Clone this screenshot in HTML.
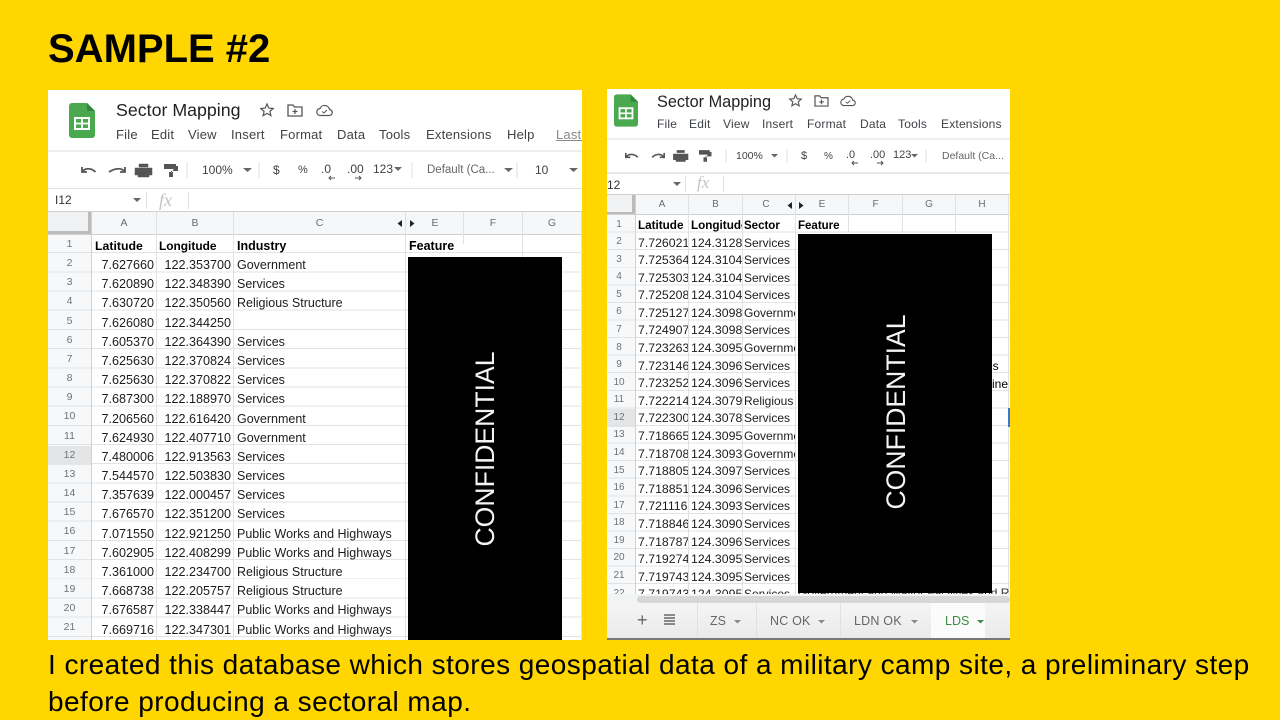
<!DOCTYPE html>
<html><head><meta charset="utf-8"><title>Sample 2</title>
<style>
html,body{margin:0;padding:0}
body{width:1280px;height:720px;background:#ffd600;position:relative;overflow:hidden;font-family:"Liberation Sans",sans-serif;color:#000}
.a{position:absolute}
.t{position:absolute;white-space:nowrap}
.sheet{position:absolute;background:#fff;overflow:hidden;filter:blur(.35px)}
.col{position:absolute;white-space:nowrap;overflow:hidden;color:#1c1c1c}
.m{color:#3f4246}
.h{color:#6a6d70;text-align:center;position:absolute}
.l{position:absolute;background:#e0e1e3}
</style></head><body>
<div class="t" style="left:48px;top:25px;font-size:40px;line-height:48px;font-weight:700">SAMPLE #2</div>

<div class="sheet" style="left:48px;top:90px;width:534px;height:550px">
 <svg class="a" style="left:21px;top:13px" width="26" height="35" viewBox="0 0 26 35"><path d="M3 0h15l8 8v24a3 3 0 0 1-3 3H3a3 3 0 0 1-3-3V3a3 3 0 0 1 3-3z" fill="#4aa94f"/><path d="M18 0l8 8h-8z" fill="#2f8a3b"/><rect x="6" y="15" width="14" height="11" fill="none" stroke="#fff" stroke-width="2"/><path d="M13 15v11M6 20.500h14" stroke="#fff" stroke-width="1.800"/></svg>
 <div class="t" style="left:68px;top:9px;font-size:17.800px;line-height:22px;color:#222">Sector Mapping</div>
 <svg class="a" style="left:211px;top:12px" width="16" height="16" viewBox="0 0 16 16"><path d="M8 2l1.800 4.100 4.400.4-3.300 2.900 1 4.300L8 11.400l-3.900 2.300 1-4.300L1.800 6.500l4.400-.4z" fill="none" stroke="#555" stroke-width="1.200"/></svg>
 <svg class="a" style="left:239px;top:13px" width="16" height="14" viewBox="0 0 16 14"><path d="M1 2h5l1.500 2H15v9H1z" fill="none" stroke="#555" stroke-width="1.300"/><path d="M8 6v5M5.500 8.500h5" stroke="#555" stroke-width="1.200"/></svg>
 <svg class="a" style="left:268px;top:13px" width="17" height="14" viewBox="0 0 17 14"><path d="M4.500 12.500a3.500 3.500 0 0 1-.5-7 5 5 0 0 1 9.500 1 3 3 0 0 1-.5 6z" fill="none" stroke="#555" stroke-width="1.200"/><path d="M6 8.500l2 1.500 3-3" fill="none" stroke="#555"/></svg>
 <div class="m" style="position:absolute;left:0;top:37px;font-size:13px;line-height:16px;letter-spacing:.2px">
  <span class="t" style="left:68px">File</span><span class="t" style="left:103px">Edit</span><span class="t" style="left:140px">View</span><span class="t" style="left:183px">Insert</span><span class="t" style="left:232px">Format</span><span class="t" style="left:289px">Data</span><span class="t" style="left:331px">Tools</span><span class="t" style="left:378px">Extensions</span><span class="t" style="left:459px">Help</span><span class="t" style="left:508px;color:#888;text-decoration:underline">Last edit</span>
 </div>
 <div class="l" style="left:0;top:60px;width:534px;height:2px;background:#eceded"></div>
 <svg class="a" style="left:32px;top:72px" width="112" height="16" viewBox="0 0 112 16"><path d="M2 5v5h5M2.500 9.500C5 6 11 5.500 15.500 10" fill="none" stroke="#555" stroke-width="1.800"/><path d="M45 5v5h-5M44.500 9.500C42 6 36 5.500 29 10" fill="none" stroke="#555" stroke-width="1.800"/><path d="M59 5h9v-3h-9zM55 6h17v7h-3v-2H58v2h-3zM58 11h11v4H58z" fill="#555" stroke="#555" stroke-width=".5"/><path d="M84 2h12v5H84zM96 4h2v5h-7v2M89 10h4v5h-4z" fill="#555"/></svg>
 <div class="t m" style="left:154px;top:73px;font-size:12px;line-height:14px">100%</div>
 <div class="t m" style="left:225px;top:73px;font-size:12px;line-height:14px">$</div>
 <div class="t m" style="left:250px;top:73px;font-size:11px;line-height:14px">%</div>
 <div class="t m" style="left:273px;top:72px;font-size:12px;line-height:14px">.0</div>
 <div class="t m" style="left:299px;top:72px;font-size:12px;line-height:14px">.00</div>
 <div class="t m" style="left:325px;top:72px;font-size:12px;line-height:14px">123</div>
 <div class="t m" style="left:379px;top:73px;font-size:11.500px;line-height:14px;color:#666">Default (Ca...</div>
 <div class="t m" style="left:487px;top:73px;font-size:12px;line-height:14px">10</div>
 <svg class="a" style="left:0;top:60px" width="534" height="40" viewBox="0 0 534 40"><path d="M195 18h9l-4.500 4zM346 17h8l-4 4zM456 18h9l-4.500 4zM521 18h9l-4.500 4z" fill="#666"/><path d="M287 28h-6m2-2l-2 2 2 2M307 28h6m-2-2l2 2-2 2" fill="none" stroke="#555"/><path d="M139 12v16M211 12v16M364 12v16M469 12v16" stroke="#e4e4e4" stroke-width="1.200"/></svg>
 <div class="l" style="left:0;top:98px;width:534px;height:1px"></div>
 <div class="t" style="left:7px;top:103px;font-size:12px;line-height:14px;color:#333">I12</div>
 <svg class="a" style="left:84px;top:107px" width="10" height="6"><path d="M1 1h8L5 5z" fill="#666"/></svg>
 <div class="l" style="left:98px;top:102px;width:1px;height:17px"></div>
 <div class="t" style="left:111px;top:100px;font-size:18px;line-height:20px;color:#c4c4c4;font-family:'Liberation Serif',serif;font-style:italic">fx</div>
 <div class="l" style="left:140px;top:102px;width:1px;height:17px"></div>
 <div class="l" style="left:0;top:121px;width:534px;height:1px;background:#cfd1d3"></div>
 <div class="a" style="left:0;top:122px;width:534px;height:22px;background:#f6f7f8"></div>
 <div class="a" style="left:0;top:122px;width:43px;height:22px;background:#f1f2f3;border-right:3px solid #bbb;border-bottom:3px solid #bbb;box-sizing:border-box"></div>
 <div class="a" style="left:0;top:144px;width:43px;height:406px;background:#f7f8f9"></div>
 <div class="a" style="left:0;top:356px;width:43px;height:19px;background:#e4e5e7"></div>
 <div class="a" style="left:0;top:144px;width:534px;height:406px;background:repeating-linear-gradient(to bottom,transparent 0,transparent 18.200px,#e2e3e5 18.200px,#e2e3e5 19.180px)"></div>
 <div class="l" style="left:0;top:144px;width:534px;height:1px;background:#cfd1d3"></div>
 <div class="l" style="left:43px;top:122px;width:1px;height:428px;background:#cfd1d3"></div>
 <div class="l" style="left:108px;top:122px;width:1px;height:428px"></div>
 <div class="l" style="left:185px;top:122px;width:1px;height:428px"></div>
 <div class="l" style="left:357px;top:122px;width:1px;height:428px"></div>
 <div class="l" style="left:415px;top:122px;width:1px;height:32px"></div>
 <div class="l" style="left:474px;top:122px;width:1px;height:428px"></div>
 <div class="l" style="left:533px;top:122px;width:1px;height:428px"></div>
 <div class="h" style="left:44px;top:127px;width:64px;font-size:10.500px">A</div>
 <div class="h" style="left:109px;top:127px;width:76px;font-size:10.500px">B</div>
 <div class="h" style="left:186px;top:127px;width:171px;font-size:10.500px">C</div>
 <div class="h" style="left:358px;top:127px;width:58px;font-size:10.500px">E</div>
 <div class="h" style="left:416px;top:127px;width:58px;font-size:10.500px">F</div>
 <div class="h" style="left:475px;top:127px;width:58px;font-size:10.500px">G</div>
 <svg class="a" style="left:348px;top:129px" width="22" height="9"><path d="M6 1v7L1.500 4.500zM14 1v7l4.500-3.500z" fill="#222"/></svg>
 <div class="col" style="left:0;top:145px;width:43px;text-align:center;font-size:10.500px;line-height:19.160px;color:#6f7275">1<br>2<br>3<br>4<br>5<br>6<br>7<br>8<br>9<br>10<br>11<br>12<br>13<br>14<br>15<br>16<br>17<br>18<br>19<br>20<br>21</div>
 <div class="t" style="left:47px;top:148.500px;font-size:12.300px;line-height:15px;font-weight:700">Latitude</div>
 <div class="t" style="left:111px;top:148.500px;font-size:11.900px;line-height:15px;font-weight:700">Longitude</div>
 <div class="t" style="left:189px;top:148.500px;font-size:12.500px;line-height:15px;font-weight:700">Industry</div>
 <div class="t" style="left:361px;top:148.500px;font-size:12.500px;line-height:15px;font-weight:700">Feature</div>
 <div class="col" style="left:44px;top:165px;width:62px;text-align:right;font-size:12.600px;line-height:19.180px;padding-top:1px">7.627660<br>7.620890<br>7.630720<br>7.626080<br>7.605370<br>7.625630<br>7.625630<br>7.687300<br>7.206560<br>7.624930<br>7.480006<br>7.544570<br>7.357639<br>7.676570<br>7.071550<br>7.602905<br>7.361000<br>7.668738<br>7.676587<br>7.669716</div>
 <div class="col" style="left:109px;top:165px;width:74px;text-align:right;font-size:12.600px;line-height:19.180px;padding-top:1px">122.353700<br>122.348390<br>122.350560<br>122.344250<br>122.364390<br>122.370824<br>122.370822<br>122.188970<br>122.616420<br>122.407710<br>122.913563<br>122.503830<br>122.000457<br>122.351200<br>122.921250<br>122.408299<br>122.234700<br>122.205757<br>122.338447<br>122.347301</div>
 <div class="col" style="left:189px;top:165px;width:168px;font-size:12.500px;line-height:19.180px;padding-top:1px">Government<br>Services<br>Religious Structure<br>&nbsp;<br>Services<br>Services<br>Services<br>Services<br>Government<br>Government<br>Services<br>Services<br>Services<br>Services<br>Public Works and Highways<br>Public Works and Highways<br>Religious Structure<br>Religious Structure<br>Public Works and Highways<br>Public Works and Highways</div>
</div>
<div class="a" style="left:408px;top:257px;width:154px;height:383px;background:#000"></div>
<div class="t" style="left:485px;top:449px;color:#f4f4f4;font-size:26.600px;line-height:30px;transform:translate(-50%,-50%) rotate(-90deg)">CONFIDENTIAL</div>

<div class="sheet" style="left:607px;top:89px;width:403px;height:551px">
 <svg class="a" style="left:7px;top:5px" width="24" height="33" viewBox="0 0 26 35"><path d="M3 0h15l8 8v24a3 3 0 0 1-3 3H3a3 3 0 0 1-3-3V3a3 3 0 0 1 3-3z" fill="#4aa94f"/><path d="M18 0l8 8h-8z" fill="#2f8a3b"/><rect x="6" y="15" width="14" height="11" fill="none" stroke="#fff" stroke-width="2"/><path d="M13 15v11M6 20.500h14" stroke="#fff" stroke-width="1.800"/></svg>
 <div class="t" style="left:50px;top:2.500px;font-size:16.300px;line-height:20px;color:#222">Sector Mapping</div>
 <svg class="a" style="left:181px;top:4px" width="15" height="15" viewBox="0 0 16 16"><path d="M8 2l1.800 4.100 4.400.4-3.300 2.900 1 4.300L8 11.400l-3.900 2.300 1-4.300L1.800 6.500l4.400-.4z" fill="none" stroke="#555" stroke-width="1.200"/></svg>
 <svg class="a" style="left:207px;top:5px" width="15" height="13" viewBox="0 0 16 14"><path d="M1 2h5l1.500 2H15v9H1z" fill="none" stroke="#555" stroke-width="1.300"/><path d="M8 6v5M5.500 8.500h5" stroke="#555" stroke-width="1.200"/></svg>
 <svg class="a" style="left:233px;top:5px" width="16" height="13" viewBox="0 0 17 14"><path d="M4.500 12.500a3.500 3.500 0 0 1-.5-7 5 5 0 0 1 9.500 1 3 3 0 0 1-.5 6z" fill="none" stroke="#555" stroke-width="1.200"/><path d="M6 8.500l2 1.500 3-3" fill="none" stroke="#555"/></svg>
 <div class="m" style="position:absolute;left:0;top:28px;font-size:12px;line-height:15px;letter-spacing:.2px">
  <span class="t" style="left:50px">File</span><span class="t" style="left:82px">Edit</span><span class="t" style="left:116px">View</span><span class="t" style="left:155px">Insert</span><span class="t" style="left:200px">Format</span><span class="t" style="left:253px">Data</span><span class="t" style="left:291px">Tools</span><span class="t" style="left:334px">Extensions</span>
 </div>
 <div class="l" style="left:0;top:49px;width:403px;height:2px;background:#eceded"></div>
 <svg class="a" style="left:17px;top:59px" width="100" height="15" viewBox="0 0 112 16"><path d="M2 5v5h5M2.500 9.500C5 6 11 5.500 15.500 10" fill="none" stroke="#555" stroke-width="1.800"/><path d="M45 5v5h-5M44.500 9.500C42 6 36 5.500 31.500 10" fill="none" stroke="#555" stroke-width="1.800"/><path d="M59 5h9v-3h-9zM55 6h17v7h-3v-2H58v2h-3zM58 11h11v4H58z" fill="#555"/><path d="M84 2h12v5H84zM96 4h2v5h-7v2M89 10h4v5h-4z" fill="#555"/></svg>
 <div class="t m" style="left:129px;top:60.500px;font-size:10.500px;line-height:13px">100%</div>
 <div class="t m" style="left:194px;top:60.500px;font-size:11px;line-height:13px">$</div>
 <div class="t m" style="left:217px;top:60.500px;font-size:10px;line-height:13px">%</div>
 <div class="t m" style="left:239px;top:60px;font-size:11px;line-height:13px">.0</div>
 <div class="t m" style="left:263px;top:60px;font-size:11px;line-height:13px">.00</div>
 <div class="t m" style="left:286px;top:60px;font-size:11px;line-height:13px">123</div>
 <div class="t m" style="left:335px;top:60.500px;font-size:10.500px;line-height:13px;color:#666">Default (Ca...</div>
 <svg class="a" style="left:0;top:50px" width="403" height="30" viewBox="0 0 403 30"><path d="M164 15h7l-3.500 3.500zM304 15h7l-3.500 3.500z" fill="#666"/><path d="M251 24h-6m2-2l-2 2 2 2M270 24h6m-2-2l2 2-2 2" fill="none" stroke="#555"/><path d="M119 10v14M180 10v14M319 10v14" stroke="#e4e4e4" stroke-width="1.200"/></svg>
 <div class="l" style="left:0;top:83px;width:403px;height:2px;background:#e6e7e8"></div>
 <div class="t" style="left:0;top:88.500px;font-size:12px;line-height:14px;color:#333">12</div>
 <svg class="a" style="left:65px;top:92px" width="10" height="6"><path d="M1 1h8L5 5z" fill="#666"/></svg>
 <div class="l" style="left:78px;top:87px;width:1px;height:16px"></div>
 <div class="t" style="left:90px;top:84px;font-size:17px;line-height:20px;color:#c4c4c4;font-family:'Liberation Serif',serif;font-style:italic">fx</div>
 <div class="l" style="left:116px;top:87px;width:1px;height:16px"></div>
 <div class="l" style="left:0;top:105px;width:403px;height:1px;background:#cfd1d3"></div>
 <div class="a" style="left:0;top:106px;width:403px;height:20px;background:#f6f7f8"></div>
 <div class="a" style="left:0;top:106px;width:28px;height:20px;background:#f1f2f3;border-right:3px solid #bbb;border-bottom:3px solid #bbb;box-sizing:border-box"></div>
 <div class="a" style="left:0;top:126px;width:28px;height:380px;background:#f7f8f9"></div>
 <div class="a" style="left:0;top:320px;width:28px;height:18px;background:#e4e5e7"></div>
 <div class="a" style="left:0;top:126px;width:403px;height:380px;background:repeating-linear-gradient(to bottom,transparent 0,transparent 16.600px,#e2e3e5 16.600px,#e2e3e5 17.580px)"></div>
 <div class="l" style="left:0;top:125px;width:403px;height:1px;background:#cfd1d3"></div>
 <div class="l" style="left:28px;top:106px;width:1px;height:400px;background:#cfd1d3"></div>
 <div class="l" style="left:81px;top:106px;width:1px;height:400px"></div>
 <div class="l" style="left:135px;top:106px;width:1px;height:400px"></div>
 <div class="l" style="left:188px;top:106px;width:1px;height:400px"></div>
 <div class="l" style="left:241px;top:106px;width:1px;height:37px"></div>
 <div class="l" style="left:295px;top:106px;width:1px;height:37px"></div>
 <div class="l" style="left:348px;top:106px;width:1px;height:37px"></div>
 <div class="l" style="left:401px;top:106px;width:1px;height:400px"></div>
 <div class="h" style="left:29px;top:110px;width:52px;font-size:10px">A</div>
 <div class="h" style="left:82px;top:110px;width:53px;font-size:10px">B</div>
 <div class="h" style="left:136px;top:110px;width:46px;font-size:10px">C</div>
 <div class="h" style="left:189px;top:110px;width:52px;font-size:10px">E</div>
 <div class="h" style="left:242px;top:110px;width:53px;font-size:10px">F</div>
 <div class="h" style="left:296px;top:110px;width:52px;font-size:10px">G</div>
 <div class="h" style="left:349px;top:110px;width:52px;font-size:10px">H</div>
 <svg class="a" style="left:179px;top:112px" width="20" height="9"><path d="M6 1v7L1.500 4.500zM13 1v7l4.500-3.500z" fill="#222"/></svg>
 <div class="col" style="left:0;top:126.500px;width:24px;text-align:center;font-size:10px;line-height:17.580px;color:#6f7275">1<br>2<br>3<br>4<br>5<br>6<br>7<br>8<br>9<br>10<br>11<br>12<br>13<br>14<br>15<br>16<br>17<br>18<br>19<br>20<br>21<br>22</div>
 <div class="t" style="left:31px;top:129.500px;font-size:11.700px;line-height:14px;font-weight:700;width:50px;overflow:hidden">Latitude</div>
 <div class="t" style="left:84px;top:129.500px;font-size:11.700px;line-height:14px;font-weight:700;width:51px;overflow:hidden">Longitude</div>
 <div class="t" style="left:137px;top:129.500px;font-size:11.500px;line-height:14px;font-weight:700">Sector</div>
 <div class="t" style="left:191px;top:129.500px;font-size:11.500px;line-height:14px;font-weight:700">Feature</div>
 <div class="col" style="left:31px;top:145.500px;width:50px;font-size:12.300px;line-height:17.600px">7.7260213<br>7.7253647<br>7.7253033<br>7.7252084<br>7.7251279<br>7.7249073<br>7.7232634<br>7.7231467<br>7.7232521<br>7.7222147<br>7.7223001<br>7.7186659<br>7.7187082<br>7.7188056<br>7.7188511<br>7.7211169<br>7.7188462<br>7.7187876<br>7.7192744<br>7.7197431<br>7.7197431</div>
 <div class="col" style="left:84px;top:145.500px;width:51px;font-size:12.300px;line-height:17.600px">124.31287<br>124.31046<br>124.31046<br>124.31042<br>124.30984<br>124.30984<br>124.30956<br>124.30963<br>124.30964<br>124.30793<br>124.30787<br>124.30956<br>124.30934<br>124.30973<br>124.30969<br>124.30932<br>124.30906<br>124.30964<br>124.30953<br>124.30951<br>124.30951</div>
 <div class="col" style="left:137px;top:145.500px;width:51px;font-size:12px;line-height:17.600px">Services<br>Services<br>Services<br>Services<br>Government<br>Services<br>Government<br>Services<br>Services<br>Religious<br>Services<br>Government<br>Government<br>Services<br>Services<br>Services<br>Services<br>Services<br>Services<br>Services<br>Services</div>
 <div class="t" style="left:191px;top:497px;font-size:12px;line-height:14px;color:#333">Government and Mayor Facilities and Road</div>
 <div class="t" style="left:379px;top:270px;font-size:12px;line-height:14px">es</div>
 <div class="t" style="left:385px;top:288px;font-size:12px;line-height:14px">ine</div>
 <div class="a" style="left:401px;top:319px;width:2px;height:19px;background:#3b78d8"></div>
 <div class="a" style="left:0;top:505px;width:403px;height:46px;background:#f3f4f4"></div>
 <div class="a" style="left:30px;top:507px;width:373px;height:7px;border-radius:4px;background:#d6d7d8"></div>
 <div class="a" style="left:0;top:514px;width:403px;height:35px;background:linear-gradient(#f5f5f5,#e9eaea)"></div>
 <div class="t" style="left:30px;top:521px;font-size:18px;line-height:20px;color:#666">+</div>
 <svg class="a" style="left:57px;top:525px" width="11" height="12"><path d="M0 1h11M0 4h11M0 7h11M0 10h11" stroke="#666" stroke-width="1.500"/></svg>
 <div class="l" style="left:90px;top:514px;width:1px;height:35px;background:#e0e0e0"></div>
 <div class="l" style="left:149px;top:514px;width:1px;height:35px;background:#e0e0e0"></div>
 <div class="l" style="left:233px;top:514px;width:1px;height:35px;background:#e0e0e0"></div>
 <div class="t" style="left:103px;top:525px;font-size:12.500px;line-height:15px;color:#666">ZS</div>
 <div class="t" style="left:163px;top:525px;font-size:12.500px;line-height:15px;color:#666;letter-spacing:.2px">NC OK</div>
 <div class="t" style="left:247px;top:525px;font-size:12.500px;line-height:15px;color:#666;letter-spacing:.2px">LDN OK</div>
 <div class="a" style="left:324px;top:514px;width:54px;height:35px;background:#fbfbfb"></div>
 <div class="t" style="left:338px;top:525px;font-size:12.500px;line-height:15px;color:#3d8b45">LDS</div>
 <svg class="a" style="left:0;top:529px" width="403" height="8"><path d="M127 2h7l-3.500 3.500zM211 2h7l-3.500 3.500zM304 2h7l-3.500 3.500z" fill="#888"/><path d="M370 2h7l-3.500 3.500z" fill="#3d8b45"/></svg>
 <div class="a" style="left:0;top:549px;width:403px;height:2px;background:#777"></div>
</div>
<div class="a" style="left:798px;top:234px;width:194px;height:359px;background:#000"></div>
<div class="t" style="left:896px;top:412px;color:#f4f4f4;font-size:26.600px;line-height:30px;transform:translate(-50%,-50%) rotate(-90deg)">CONFIDENTIAL</div>

<div class="t" style="left:48px;top:646px;font-size:28px;line-height:37px;letter-spacing:.44px">I created this database which stores geospatial data of a military camp site, a preliminary step</div>
<div class="t" style="left:48px;top:683px;font-size:28px;line-height:37px;letter-spacing:.44px">before producing a sectoral map.</div>
</body></html>
